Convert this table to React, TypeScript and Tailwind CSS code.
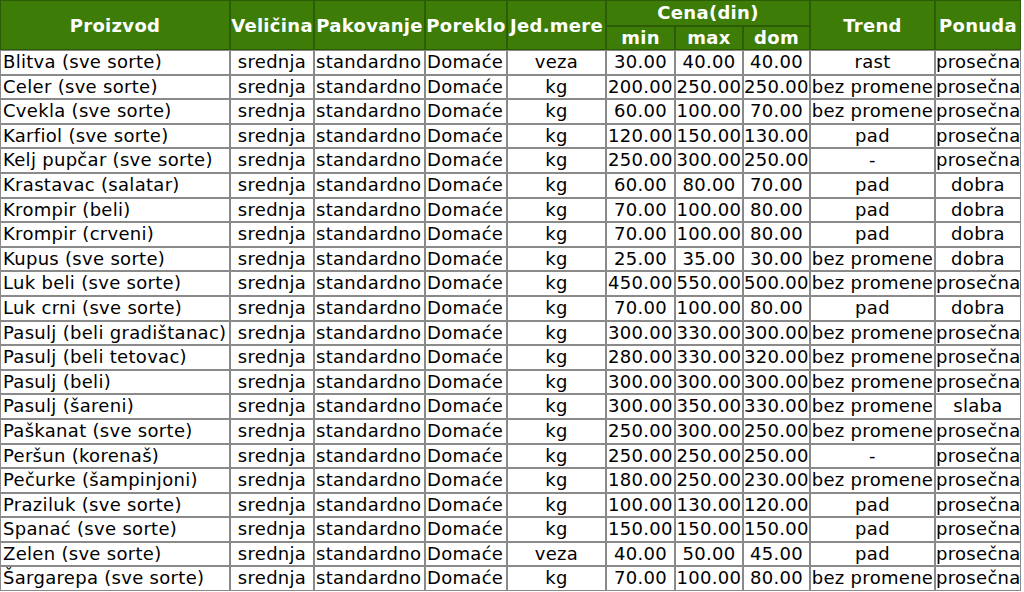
import React from "react";

type Row = [string, string, string, string, string, string, string];

// proizvod, jed.mere, min, max, dom, trend, ponuda
const rows: Row[] = [
  ["Blitva (sve sorte)", "veza", "30.00", "40.00", "40.00", "rast", "prosečna"],
  ["Celer (sve sorte)", "kg", "200.00", "250.00", "250.00", "bez promene", "prosečna"],
  ["Cvekla (sve sorte)", "kg", "60.00", "100.00", "70.00", "bez promene", "prosečna"],
  ["Karfiol (sve sorte)", "kg", "120.00", "150.00", "130.00", "pad", "prosečna"],
  ["Kelj pupčar (sve sorte)", "kg", "250.00", "300.00", "250.00", "-", "prosečna"],
  ["Krastavac (salatar)", "kg", "60.00", "80.00", "70.00", "pad", "dobra"],
  ["Krompir (beli)", "kg", "70.00", "100.00", "80.00", "pad", "dobra"],
  ["Krompir (crveni)", "kg", "70.00", "100.00", "80.00", "pad", "dobra"],
  ["Kupus (sve sorte)", "kg", "25.00", "35.00", "30.00", "bez promene", "dobra"],
  ["Luk beli (sve sorte)", "kg", "450.00", "550.00", "500.00", "bez promene", "prosečna"],
  ["Luk crni (sve sorte)", "kg", "70.00", "100.00", "80.00", "pad", "dobra"],
  ["Pasulj (beli gradištanac)", "kg", "300.00", "330.00", "300.00", "bez promene", "prosečna"],
  ["Pasulj (beli tetovac)", "kg", "280.00", "330.00", "320.00", "bez promene", "prosečna"],
  ["Pasulj (beli)", "kg", "300.00", "300.00", "300.00", "bez promene", "prosečna"],
  ["Pasulj (šareni)", "kg", "300.00", "350.00", "330.00", "bez promene", "slaba"],
  ["Paškanat (sve sorte)", "kg", "250.00", "300.00", "250.00", "bez promene", "prosečna"],
  ["Peršun (korenaš)", "kg", "250.00", "250.00", "250.00", "-", "prosečna"],
  ["Pečurke (šampinjoni)", "kg", "180.00", "250.00", "230.00", "bez promene", "prosečna"],
  ["Praziluk (sve sorte)", "kg", "100.00", "130.00", "120.00", "pad", "prosečna"],
  ["Spanać (sve sorte)", "kg", "150.00", "150.00", "150.00", "pad", "prosečna"],
  ["Zelen (sve sorte)", "veza", "40.00", "50.00", "45.00", "pad", "prosečna"],
  ["Šargarepa (sve sorte)", "kg", "70.00", "100.00", "80.00", "bez promene", "prosečna"],
];

const th =
  "border border-[#2c5c06] bg-[#3d7d07] text-white font-bold text-center align-middle p-0 whitespace-nowrap overflow-hidden";
const td =
  "border border-[#8a8a8a] p-0 leading-[22.6px] whitespace-nowrap overflow-hidden";

export default function App() {
  return (
    <div className="w-[1024px] h-[592px] overflow-hidden bg-white">
      <table
        className="table-fixed border-separate border-spacing-0 w-[1021px] text-[18px] tracking-[0.3px] text-black"
        style={{ fontFamily: '"DejaVu Sans", Verdana, sans-serif' }}
      >
        <colgroup>
          <col className="w-[230px]" />
          <col className="w-[84px]" />
          <col className="w-[111px]" />
          <col className="w-[82px]" />
          <col className="w-[99px]" />
          <col className="w-[69px]" />
          <col className="w-[68px]" />
          <col className="w-[67px]" />
          <col className="w-[125px]" />
          <col className="w-[86px]" />
        </colgroup>
        <thead>
          <tr>
            <th rowSpan={2} className={th}>Proizvod</th>
            <th rowSpan={2} className={th}>Veličina</th>
            <th rowSpan={2} className={th}>Pakovanje</th>
            <th rowSpan={2} className={th}>Poreklo</th>
            <th rowSpan={2} className={th}>Jed.mere</th>
            <th colSpan={3} className={`${th} leading-[24px]`}>Cena(din)</th>
            <th rowSpan={2} className={th}>Trend</th>
            <th rowSpan={2} className={th}>Ponuda</th>
          </tr>
          <tr>
            <th className={`${th} leading-[22px]`}>min</th>
            <th className={`${th} leading-[22px]`}>max</th>
            <th className={`${th} leading-[22px]`}>dom</th>
          </tr>
        </thead>
        <tbody>
          {rows.map((r) => (
            <tr key={r[0]}>
              <td className={`${td} text-left pl-[2px]`}>{r[0]}</td>
              <td className={`${td} text-center`}>srednja</td>
              <td className={`${td} text-left pl-px`}>standardno</td>
              <td className={`${td} text-left pl-px`}>Domaće</td>
              <td className={`${td} text-center`}>{r[1]}</td>
              <td className={`${td} text-center`}>{r[2]}</td>
              <td className={`${td} text-center`}>{r[3]}</td>
              <td className={`${td} text-center`}>{r[4]}</td>
              <td className={`${td} text-center`}>{r[5]}</td>
              <td className={`${td} text-center`}>{r[6]}</td>
            </tr>
          ))}
        </tbody>
      </table>
    </div>
  );
}
